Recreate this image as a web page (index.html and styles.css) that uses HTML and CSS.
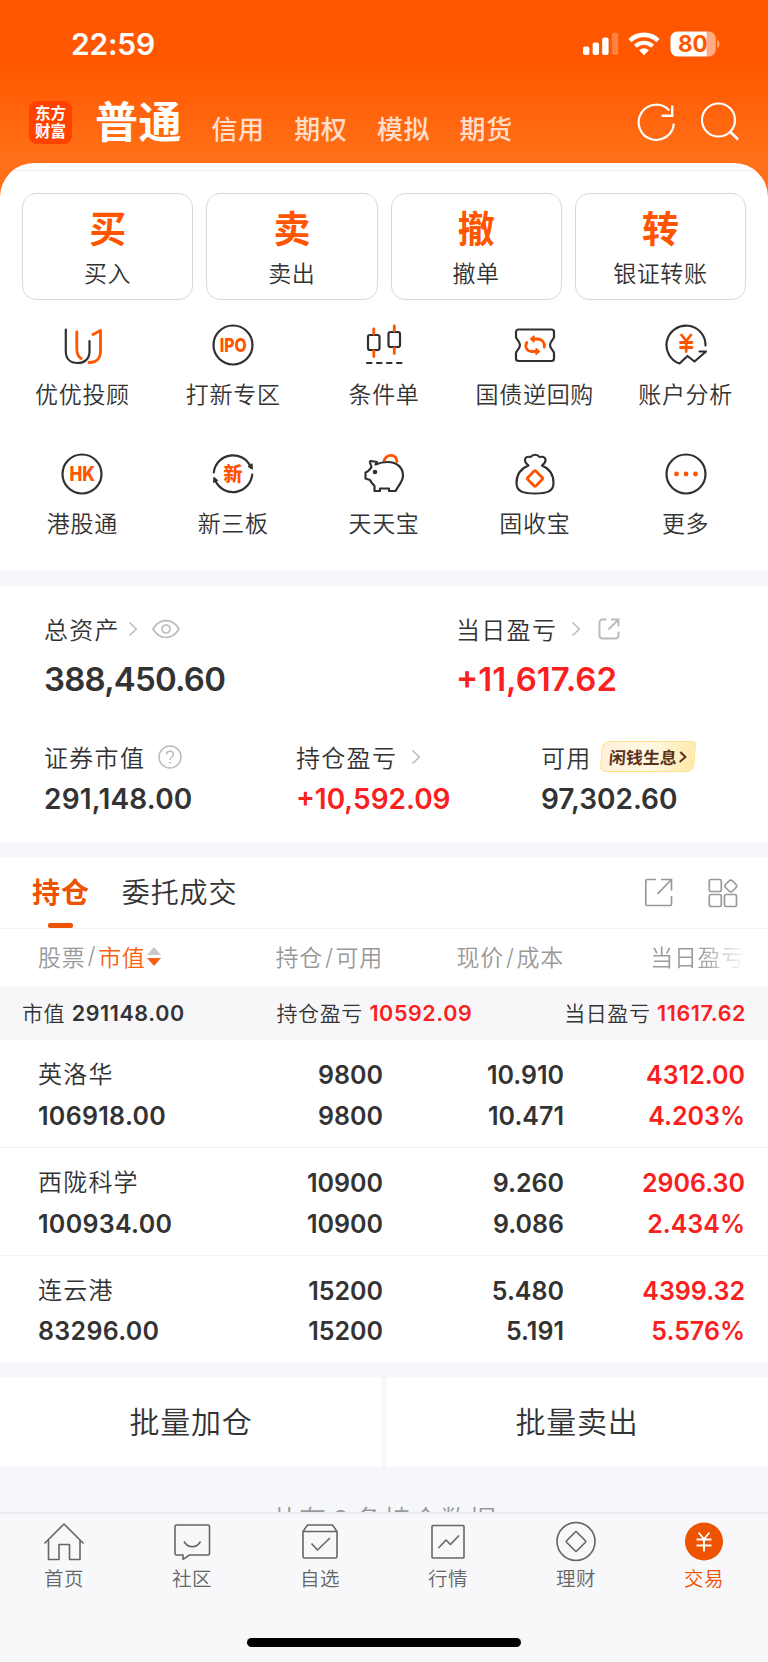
FILE: index.html
```html
<!DOCTYPE html>
<html lang="zh-CN">
<head>
    <meta charset="UTF-8">
    <meta name="viewport" content="width=device-width, initial-scale=1.0">
    <title>交易</title>
    <link rel="stylesheet" href="styles.css">
</head>
<body>
    <div class="app">
        <div class="status-bar">
            <span class="time">22:59</span>
            <div class="status-icons">
                <svg class="signal" width="36" height="24" viewBox="0 0 36 24" fill="#fff">
                    <rect x="0" y="14.5" width="6.4" height="8.5" rx="2"/>
                    <rect x="9.6" y="10.5" width="6.4" height="12.5" rx="2"/>
                    <rect x="19.2" y="5.5" width="6.4" height="17.5" rx="2"/>
                    <rect x="28.8" y="0.8" width="6.4" height="22.2" rx="2" opacity="0.25"/>
                </svg>
                <svg class="wifi" width="32" height="24" viewBox="0 0 32 24" fill="none" stroke="#fff">
                    <path d="M2 8.6a20 20 0 0 1 28 0" stroke-width="4.6"/>
                    <path d="M7.4 14.2a12.4 12.4 0 0 1 17.2 0" stroke-width="4.2"/>
                    <path d="M16 23.2l-4.9-5a7 7 0 0 1 9.8 0z" fill="#fff" stroke="none"/>
                </svg>
                <svg class="battery" width="50" height="26" viewBox="0 0 50 26">
                    <path d="M7.5 0.5H36.8V25.5H7.5a7 7 0 0 1-7-7V7.5a7 7 0 0 1 7-7z" fill="#fff"/>
                    <path d="M36.8 0.5h2a7 7 0 0 1 7 7v11a7 7 0 0 1-7 7h-2z" fill="#fff" opacity="0.5"/>
                    <path d="M47.2 9c3 1.5 3 6.5 0 8z" fill="#fff" opacity="0.5"/>
                    <text x="22.8" y="21.2" class="battery-text">80</text>
                </svg>
            </div>
        </div>

        <div class="header">
            <div class="logo">东方<br>财富</div>
            <div class="account-tabs">
                <span class="account active">普通</span>
                <span class="account">信用</span>
                <span class="account">期权</span>
                <span class="account">模拟</span>
                <span class="account">期货</span>
            </div>
            <div class="header-icons">
                <svg width="40" height="40" viewBox="0 0 40 40" fill="none" stroke="#fff" stroke-width="2.2">
                    <path d="M37.8 21.6A17.6 17.6 0 1 1 33.3 8.5"/>
                    <path d="M36.2 3.5V13.8H25.7" stroke-width="2.4"/>
                </svg>
                <svg width="40" height="40" viewBox="0 0 40 40" fill="none" stroke="#fff" stroke-width="2.2">
                    <circle cx="18.5" cy="18" r="16.5"/>
                    <path d="M30 29.5l8 8" stroke-width="2.6"/>
                </svg>
            </div>
        </div>

        <div class="sheet">
            <div class="actions">
                <div class="action"><b>买</b><span>买入</span></div>
                <div class="action"><b>卖</b><span>卖出</span></div>
                <div class="action"><b>撤</b><span>撤单</span></div>
                <div class="action"><b>转</b><span>银证转账</span></div>
            </div>

            <div class="shortcuts">
                <div class="shortcut">
                    <svg class="icon" viewBox="0 0 42 42">
                        <path d="M4.8 5.5v22c0 7.500 4.800 11.500 11.700 11.500s12-4 12-11.500V17"/>
                        <path class="hot" d="M15.800 8v16.500c0 5 .8 8 4.400 10M32 10.500l7.500-4v21c0 7-4.500 11-11.500 11"/>
                    </svg>
                    <span>优优投顾</span>
                </div>
                <div class="shortcut">
                    <svg class="icon" viewBox="0 0 42 42">
                        <circle cx="21" cy="21" r="19.5"/>
                        <text x="21.2" y="27.8" textLength="27" lengthAdjust="spacingAndGlyphs" class="icon-text ipo">IPO</text>
                    </svg>
                    <span>打新专区</span>
                </div>
                <div class="shortcut">
                    <svg class="icon" viewBox="0 0 42 42">
                        <rect x="5" y="11" width="11.500" height="15" rx="2"/>
                        <rect x="25.500" y="8" width="11.500" height="15" rx="2"/>
                        <path class="hot" d="M10.800 5v5M10.800 27v5.500M31.300 2v5M31.300 24v5.500"/>
                        <path d="M4 39h4.500M14 39h4.500M24 39h4.500M34 39h4.500"/>
                    </svg>
                    <span>条件单</span>
                </div>
                <div class="shortcut">
                    <svg class="icon" viewBox="0 0 42 42">
                        <path d="M4.500 5.500h33a2.500 2.500 0 0 1 2.500 2.500v5c0 2-4 4.500-4 8s4 6 4 8v5.500a2.500 2.500 0 0 1-2.500 2.500h-33a2.500 2.500 0 0 1-2.500-2.500V29c0-2 4-4.500 4-8s-4-6-4-8V8a2.500 2.500 0 0 1 2.500-2.500z"/>
                        <path class="hot" d="M19.500 15h4c4.500 0 7.500 3.500 6.800 8M12.800 18.500c-2.200 4-.5 9 5.200 9h3"/>
                        <path class="hot-fill thin" d="M16.500 15l3.500-3v6zM25.500 27.500l-3.500-3v6z"/>
                    </svg>
                    <span>国债逆回购</span>
                </div>
                <div class="shortcut">
                    <svg class="icon" viewBox="0 0 42 42">
                        <path d="M40.500 21.500A19.500 19.500 0 1 0 14.500 39.500l8-7.500 7 5.500 11.500-10h-6.500"/>
                        <path class="hot" d="M16.500 11l4.700 6 4.700-6M21.200 17v10.500M15.500 18.500h11.500M15.500 23.500h11.500"/>
                    </svg>
                    <span>账户分析</span>
                </div>
                <div class="shortcut">
                    <svg class="icon" viewBox="0 0 42 42">
                        <circle cx="21" cy="21" r="19.5"/>
                        <text x="21.2" y="28" textLength="25.5" lengthAdjust="spacingAndGlyphs" class="icon-text hk">HK</text>
                    </svg>
                    <span>港股通</span>
                </div>
                <div class="shortcut">
                    <svg class="icon" viewBox="0 0 42 42">
                        <path d="M1.800 19.500A19.300 19.300 0 0 1 38.500 13.500M40.200 21.500A19.300 19.300 0 0 1 3.500 28"/>
                        <path class="dark-fill thin" d="M36.500 13.500l3.500-2.500.3 5zM5.500 27.500l-3.800 1.800.2-4.800z"/>
                        <text x="21" y="28" class="icon-text xin">新</text>
                    </svg>
                    <span>新三板</span>
                </div>
                <div class="shortcut">
                    <svg class="icon" viewBox="0 0 42 42">
                        <path class="hot" d="M21 8c2.500-7.500 12-7.500 13 .5"/>
                        <path d="M12.500 11.500c5-2 8-2.500 12-2.500 10.500 0 15.500 6.500 15.500 13.500 0 6-4 9-7.500 15.500h-6.500v-2.500h-9v2.500h-5.500v-5c-2-2-3.500-3.500-4.500-6l-4.500-1.500v-6c3-1 4.500-3 6-5.500l-1.500-4.500c-.5-2.500 3-1 7-.5z"/>
                        <circle class="dark-fill" cx="12" cy="19" r="1.2"/>
                    </svg>
                    <span>天天宝</span>
                </div>
                <div class="shortcut">
                    <svg class="icon" viewBox="0 0 42 42">
                        <path d="M14.500 12.500c-2.500-2-4-3.500-3.500-6 .5-3 3-3 5.500-2.500 2.500-3 7-3 9 0 3-.5 5.500-.5 6 2.500s-1 4-3.500 6c7 3 11.500 9.500 11.500 17.500 0 9-7.500 10.500-18.500 10.500s-18.500-1.500-18.500-10.500c0-8 4.500-14.500 12-17.500z"/>
                        <rect class="hot" x="15.200" y="19.700" width="11.600" height="11.600" rx="1.500" transform="rotate(45 21 25.500)"/>
                    </svg>
                    <span>固收宝</span>
                </div>
                <div class="shortcut">
                    <svg class="icon" viewBox="0 0 42 42">
                        <circle cx="21" cy="21" r="19.5"/>
                        <circle class="hot-fill" cx="11.500" cy="21" r="1.300"/>
                        <circle class="hot-fill" cx="21" cy="21" r="1.300"/>
                        <circle class="hot-fill" cx="30.500" cy="21" r="1.300"/>
                    </svg>
                    <span>更多</span>
                </div>
            </div>
        </div>

        <div class="panel assets">
            <div class="assets-row main">
                <div class="asset">
                    <div class="label">总资产
                        <svg class="chevron" viewBox="0 0 10 16"><path d="M1.500 1.500L8.300 8l-6.800 6.500"/></svg>
                        <svg class="eye" viewBox="0 0 28 20"><path d="M1 10C7.500-1.300 20.500-1.300 27 10 20.500 21.300 7.500 21.300 1 10z"/><circle cx="14" cy="10" r="4"/></svg>
                    </div>
                    <div class="value total">388,450.60</div>
                </div>
                <div class="asset">
                    <div class="label">当日盈亏
                        <svg class="chevron far" viewBox="0 0 10 16"><path d="M1.500 1.500L8.300 8l-6.800 6.500"/></svg>
                        <svg class="share" viewBox="0 0 22 22"><path d="M8.500 1.500H4.500a3 3 0 0 0-3 3v13a3 3 0 0 0 3 3h13a3 3 0 0 0 3-3V13.500M13 1.500h7.500V8.500M20 2l-9.500 9.500"/></svg>
                    </div>
                    <div class="value up">+11,617.62</div>
                </div>
            </div>
            <div class="assets-row sub">
                <div class="asset">
                    <div class="label">证券市值
                        <svg class="help" viewBox="0 0 24 24"><circle cx="12" cy="12" r="11"/><path d="M8.500 9.500c.2-4.500 7-4.500 7 0 0 2.500-3.500 2.500-3.500 5.500M12 17v1.600"/></svg>
                    </div>
                    <div class="value market">291,148.00</div>
                </div>
                <div class="asset">
                    <div class="label">持仓盈亏
                        <svg class="chevron far" viewBox="0 0 10 16"><path d="M1.500 1.500L8.300 8l-6.800 6.500"/></svg>
                    </div>
                    <div class="value up">+10,592.09</div>
                </div>
                <div class="asset">
                    <div class="label">可用
                        <span class="promo">闲钱生息<svg viewBox="0 0 8 12"><path d="M1 1l5.500 5L1 11"/></svg></span>
                    </div>
                    <div class="value">97,302.60</div>
                </div>
            </div>
        </div>

        <div class="panel holdings">
            <div class="tabs">
                <div class="tab active">持仓</div>
                <div class="tab">委托成交</div>
                <div class="tab-icons">
                    <svg width="30" height="30" viewBox="0 0 30 30"><path d="M12 1.500H3a1.200 1.200 0 0 0-1.200 1.200V26.300a1.200 1.200 0 0 0 1.200 1.200H26.300a1.200 1.200 0 0 0 1.200-1.200V18M17 1.500H27.500V12.500M27 2L13.500 15.800"/></svg>
                    <svg width="30" height="30" viewBox="0 0 30 30"><rect x="1.300" y="1.500" width="12" height="12" rx="1.500"/><rect x="1.300" y="16.500" width="12" height="12" rx="1.500"/><rect x="16.500" y="16.500" width="12" height="12" rx="1.500"/><rect x="18" y="3.200" width="9.600" height="9.600" rx="2.500" transform="rotate(45 22.800 8)"/></svg>
                </div>
            </div>
            <div class="table-head">
                <span>股票<i>/</i><em>市值</em><svg class="sort" viewBox="0 0 14 19"><path d="M7 0l7 8H0z" fill="#c8c8c8"/><path d="M7 19l7-8H0z" fill="#fa5f12"/></svg></span>
                <span>持仓<i>/</i>可用</span>
                <span>现价<i>/</i>成本</span>
                <span class="fade">当日盈亏</span>
            </div>
            <div class="summary">
                <span>市值 <b>291148.00</b></span>
                <span>持仓盈亏 <b class="up">10592.09</b></span>
                <span>当日盈亏 <b class="up">11617.62</b></span>
            </div>
            <div class="stock">
                <div><span class="name">英洛华</span><b>106918.00</b></div>
                <div><b>9800</b><b>9800</b></div>
                <div><b>10.910</b><b>10.471</b></div>
                <div class="up"><b>4312.00</b><b>4.203%</b></div>
            </div>
            <div class="stock">
                <div><span class="name">西陇科学</span><b>100934.00</b></div>
                <div><b>10900</b><b>10900</b></div>
                <div><b>9.260</b><b>9.086</b></div>
                <div class="up"><b>2906.30</b><b>2.434%</b></div>
            </div>
            <div class="stock">
                <div><span class="name">连云港</span><b>83296.00</b></div>
                <div><b>15200</b><b>15200</b></div>
                <div><b>5.480</b><b>5.191</b></div>
                <div class="up"><b>4399.32</b><b>5.576%</b></div>
            </div>
        </div>

        <div class="batch">
            <div>批量加仓</div>
            <div>批量卖出</div>
        </div>

        <div class="count"><p>共有<span>3</span>条持仓数据</p></div>

        <div class="tabbar">
            <div class="nav-item">
                <svg viewBox="0 0 42 42"><path d="M1.500 22.500L21 3l19.500 19.500M5.500 19v19.500H16V23.500h10.500v15H37V19"/></svg>
                <span>首页</span>
            </div>
            <div class="nav-item">
                <svg viewBox="0 0 42 42"><path d="M5 4h32a1.500 1.500 0 0 1 1.500 1.500v27A1.500 1.500 0 0 1 37 34H18.500l-6.500 4.300V34H5.500A1.500 1.500 0 0 1 4 32.500v-27A1.500 1.500 0 0 1 5.500 4M13 20.500c4 7 12.500 7 16.500 0"/></svg>
                <span>社区</span>
            </div>
            <div class="nav-item">
                <svg viewBox="0 0 42 42"><path d="M4 10.500v25A1.500 1.500 0 0 0 5.500 37h31a1.500 1.500 0 0 0 1.500-1.500v-25L33.500 4h-25zM4 10.500h34M12.500 22.500l6 6.500L31 17"/></svg>
                <span>自选</span>
            </div>
            <div class="nav-item">
                <svg viewBox="0 0 42 42"><rect x="5" y="4.500" width="32" height="32.500" rx="1"/><path d="M11.500 27l7.500-8 4.500 4.500 8.500-9"/></svg>
                <span>行情</span>
            </div>
            <div class="nav-item">
                <svg viewBox="0 0 42 42"><circle cx="21" cy="20.500" r="19"/><rect x="13.800" y="13.300" width="14.400" height="14.400" rx="1" transform="rotate(45 21 20.500)"/></svg>
                <span>理财</span>
            </div>
            <div class="nav-item active">
                <svg viewBox="0 0 42 42"><circle cx="21" cy="20.500" r="19"/><path d="M15.500 11.500l5.500 6.500 5.500-6.500M21 18v12.500M13.500 18.500h15M13.500 24.500h15"/></svg>
                <span>交易</span>
            </div>
            <div class="home-indicator"></div>
        </div>
    </div>
</body>
</html>
```

FILE: styles.css
```css
* {
    box-sizing: border-box;
}
body {
    margin: 0;
    font-family: Inter, "Noto Sans CJK SC", sans-serif;
    font-weight: 350;
    color: #333;
    background: #f6f7fa;
}
.app {
    width: 768px;
    height: 1662px;
    overflow: hidden;
    display: flex;
    flex-direction: column;
    background: linear-gradient(#ff5700 0, #ff5700 62px, #ff7018 160px, #ff7018 230px, #f6f7fa 230px);
}
.app > * {
    flex: none;
}
svg {
    display: block;
    flex: none;
}
b {
    font-weight: 600;
}
.up {
    color: #fa2020;
}

/* status bar */
.status-bar {
    height: 87px;
    padding: 0 48px 0 71px;
    display: flex;
    justify-content: space-between;
    align-items: center;
}
.time {
    color: #fff;
    font-size: 30px;
    font-weight: 600;
    letter-spacing: -0.2px;
}
.status-icons {
    display: flex;
    align-items: center;
    gap: 10px;
}
.signal {
    margin-right: -1px;
}
.battery-text {
    font-size: 22.5px;
    font-weight: 700;
    text-anchor: middle;
    fill: #ff5700;
}

/* header */
.header {
    height: 76px;
    padding: 1px 29px 0;
    display: flex;
    align-items: flex-start;
}
.logo {
    width: 43px;
    height: 43px;
    margin-top: 13px;
    padding-top: 4px;
    border-radius: 8px;
    background: #ff4200;
    color: #fff;
    font-family: "Liberation Serif", "Noto Sans CJK SC", serif;
    font-size: 15.5px;
    font-weight: 700;
    line-height: 18px;
    text-align: center;
}
.account-tabs {
    display: flex;
    align-items: baseline;
    margin-left: 23px;
    gap: 29.5px;
}
.account {
    position: relative;
    top: 2px;
    color: rgba(255, 255, 255, 0.8);
    font-size: 26px;
    font-weight: 500;
    letter-spacing: 0.6px;
}
.account.active {
    top: 1px;
    color: #fff;
    font-size: 43px;
    font-weight: 700;
    line-height: 66px;
    letter-spacing: 0.5px;
}
.header-icons {
    display: flex;
    gap: 24px;
    margin: 14px -1px 0 auto;
}

/* quick actions */
.sheet {
    height: 408px;
    padding-top: 7px;
    background: #fff;
    border-radius: 34px 34px 0 0;
    overflow: hidden;
}
.actions {
    display: flex;
    gap: 13px;
    padding: 22px 22px 0;
    border-top: 1px solid #eee;
}
.action {
    flex: 1;
    height: 107px;
    border: 1px solid #d8d8d8;
    border-radius: 14px;
    display: flex;
    flex-direction: column;
    align-items: center;
}
.action b {
    margin-top: 15px;
    height: 42px;
    line-height: 42px;
    font-size: 37px;
    font-weight: 700;
    color: #ff5500;
}
.action span {
    margin-top: 8px;
    line-height: 30px;
    font-size: 23px;
    letter-spacing: 0.6px;
}
.shortcuts {
    display: grid;
    grid-template-columns: repeat(5, 1fr);
    row-gap: 45px;
    padding: 24px 7px 0;
}
.shortcut {
    display: flex;
    flex-direction: column;
    align-items: center;
    height: 84px;
}
.shortcut span {
    margin-top: 14px;
    line-height: 30px;
    font-size: 23px;
    letter-spacing: 0.7px;
    white-space: nowrap;
}
.icon {
    width: 42px;
    height: 42px;
    fill: none;
    stroke: #303030;
    stroke-width: 2.2;
    stroke-linecap: round;
    stroke-linejoin: round;
}
.icon .hot {
    stroke: #ff5500;
    stroke-width: 2.8;
}
.icon .hot-fill {
    fill: #ff5500;
    stroke: #ff5500;
}
.icon .dark-fill {
    fill: #303030;
}
.icon .thin {
    stroke-width: 1.2;
}
.icon-text {
    fill: #ff5500;
    stroke: none;
    text-anchor: middle;
    font-weight: 800;
}
.ipo {
    font-size: 19px;
}
.hk {
    font-size: 19.5px;
}
.xin {
    font-size: 19px;
}

/* assets */
.panel {
    background: #fff;
    margin-top: 14.5px;
}
.assets {
    height: 256.5px;
    padding: 25px 44px 0;
}
.assets-row {
    display: flex;
}
.label {
    display: flex;
    align-items: center;
    height: 36px;
    font-size: 24px;
    letter-spacing: 1.3px;
}
.label svg {
    fill: none;
    stroke: #bbb;
    stroke-width: 1.5;
}
.value {
    font-size: 28px;
    font-weight: 600;
    line-height: 40px;
}
.main .value {
    margin-top: 9px;
    font-size: 33px;
    line-height: 46px;
}
.main .total {
    letter-spacing: -0.8px;
}
.main .asset:first-child {
    width: 412px;
}
.sub {
    margin-top: 37px;
}
.sub .value {
    margin-top: 4px;
}
.sub .market {
    letter-spacing: 0.2px;
}
.sub .asset:nth-child(1) {
    width: 252px;
}
.sub .asset:nth-child(2) {
    width: 245px;
}
.chevron {
    width: 10px;
    height: 16px;
    margin-left: 8px;
}
.chevron.far {
    margin-left: 14px;
}
.label .eye {
    width: 28px;
    height: 20px;
    margin-left: 14px;
    stroke-width: 1.7;
}
.label .share {
    width: 22px;
    height: 22px;
    margin-left: 17px;
    stroke-width: 1.9;
}
.label .help {
    width: 24px;
    height: 24px;
    margin-left: 13px;
}
.promo {
    display: flex;
    align-items: center;
    justify-content: center;
    gap: 2px;
    width: 94px;
    height: 31px;
    margin-left: 9px;
    border: 1px solid #ffe08a;
    border-radius: 8px 4px 8px 6px;
    background: linear-gradient(100deg, #fff0d8, #fff8e4 50%, #ffe9a8);
    color: #5c321c;
    font-size: 17px;
    font-weight: 700;
    letter-spacing: 0;
    transform: skewX(-4deg);
}
.label .promo svg {
    width: 8px;
    height: 12px;
    stroke: #5c321c;
    stroke-width: 2;
}

/* holdings */
.tabs {
    display: flex;
    height: 72px;
    padding-left: 32px;
    border-bottom: 1px solid #f3f3f5;
}
.tab {
    position: relative;
    margin-right: 34px;
    line-height: 73px;
    font-size: 28px;
    letter-spacing: 0.9px;
}
.tab.active {
    margin-right: 32px;
    color: #ed5300;
    font-weight: 600;
}
.tab.active::after {
    content: "";
    position: absolute;
    left: 16px;
    bottom: 0;
    width: 25px;
    height: 5px;
    border-radius: 2px;
    background: #ed5300;
}
.tab-icons {
    display: flex;
    gap: 34px;
    margin: 21px 30px 0 auto;
}
.tab-icons svg {
    fill: none;
    stroke: #999;
    stroke-width: 1.7;
}
.table-head,
.stock {
    display: grid;
    grid-template-columns: 179px 166px 181px 181px;
    padding-left: 38px;
    text-align: right;
}
.table-head {
    height: 57.5px;
    padding-bottom: 2px;
    align-items: center;
    color: #999;
    font-size: 23px;
    letter-spacing: 0.7px;
}
.table-head span:first-child {
    display: flex;
    align-items: center;
}
.table-head i {
    font-style: normal;
    margin: 0 2px;
}
.table-head em {
    font-style: normal;
    color: #fa5f12;
}
.sort {
    width: 14px;
    height: 19px;
    margin-left: 1px;
}
.fade {
    background: linear-gradient(90deg, #999 75%, #f4f4f4 98%);
    background-clip: text;
    -webkit-background-clip: text;
    color: transparent;
}
.summary {
    display: flex;
    align-items: center;
    justify-content: space-between;
    height: 54px;
    padding: 0 22px 2px;
    background: #f7f7fa;
    font-size: 21px;
    letter-spacing: 0.6px;
}
.summary b {
    font-size: 21.5px;
}
.stock {
    height: 107.3px;
    padding-top: 15px;
    font-size: 25px;
    line-height: 40.5px;
}
.stock + .stock {
    border-top: 1px solid #f3f3f5;
}
.stock > div {
    display: flex;
    flex-direction: column;
}
.stock > div:first-child {
    text-align: left;
    letter-spacing: 0.3px;
}
.stock .name {
    font-size: 24px;
    letter-spacing: 1.2px;
}

/* batch buttons */
.batch {
    display: flex;
    gap: 4px;
    height: 90px;
    margin-top: 15px;
}
.batch div {
    flex: 1;
    background: #fff;
    font-size: 30px;
    letter-spacing: 0.8px;
    line-height: 91px;
    text-align: center;
}
.count {
    height: 45px;
    overflow: hidden;
    text-align: center;
    color: #999;
    font-size: 27px;
    letter-spacing: 1.4px;
}
.count p {
    margin: 34px 0 0;
    line-height: 40px;
}
.count span {
    margin: 0 5px;
}

/* bottom navigation */
.tabbar {
    position: relative;
    display: flex;
    height: 151px;
    padding-top: 7px;
    border-top: 2px solid #ebecef;
    background: #f8f8fb;
}
.nav-item {
    flex: 1;
    display: flex;
    flex-direction: column;
    align-items: center;
    color: #666;
    font-size: 19.5px;
    letter-spacing: 0.4px;
}
.nav-item svg {
    width: 42px;
    height: 42px;
    fill: none;
    stroke: #666;
    stroke-width: 1.6;
    stroke-linejoin: round;
}
.nav-item span {
    margin-top: 3px;
    line-height: 26px;
}
.nav-item.active {
    color: #ed5300;
}
.nav-item.active circle {
    fill: #ed5300;
    stroke: none;
}
.nav-item.active path {
    stroke: #fff;
    stroke-width: 1.9;
}
.home-indicator {
    position: absolute;
    left: 247px;
    bottom: 16px;
    width: 274px;
    height: 9px;
    border-radius: 5px;
    background: #000;
}
```
